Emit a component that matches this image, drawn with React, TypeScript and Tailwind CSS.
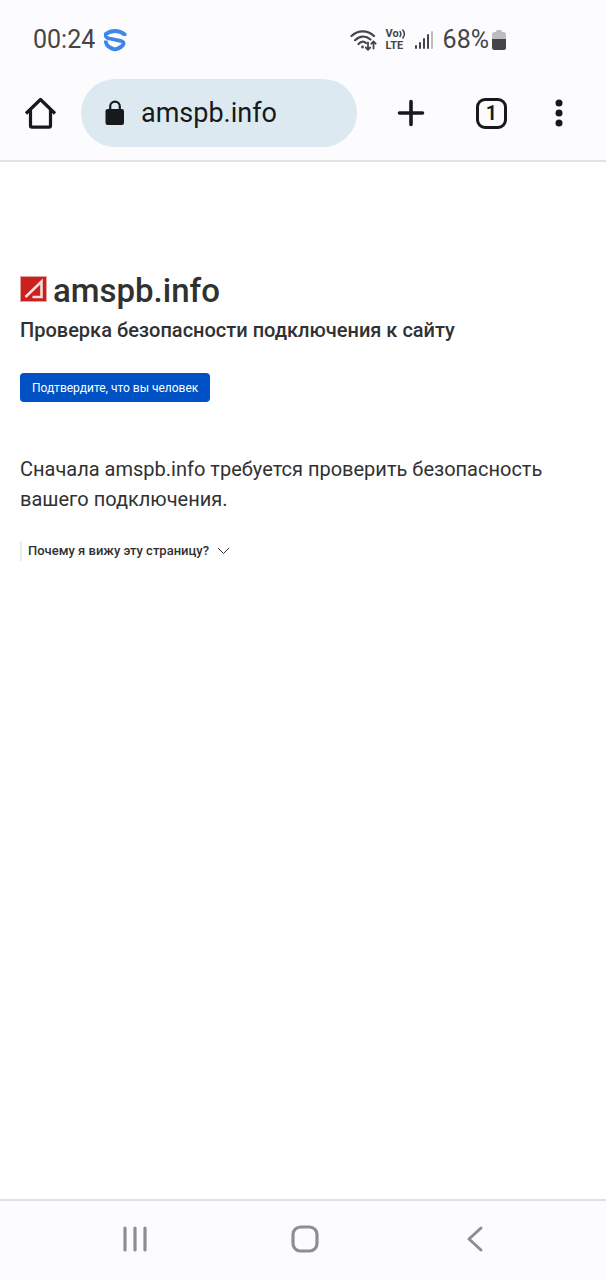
import React, { useState } from 'react';

// ── Status bar icons ────────────────────────────────────────────────────────
const ShieldIcon = () => (
  <svg width="24" height="24" viewBox="0 0 24 24" fill="none" stroke="#3f86ea" strokeWidth="3.800">
    <path d="M21.500 8V6.200C18.500 4 15.500 3 12 3C8.500 3 5.500 4 2.800 6V8C3 9.600 4.500 10 6.500 10.500L17.500 12.800C20.500 13.500 21.300 15 20 17C18.500 19 15.500 20.500 12 21.500C8.500 20.500 5.500 19 4 17C3 15.500 2.700 14.500 2.700 12.500" />
  </svg>
);

const WifiIcon = () => (
  <svg width="28" height="24" viewBox="0 0 28 24" fill="none" stroke="#454547" strokeWidth="2.200" strokeLinecap="round">
    <path d="M1.500 8C8 1.800 17.500 1.800 24 8" />
    <path d="M5 12.200C10 7.500 16 7.500 20.500 11.500" />
    <path d="M8.500 16C11 13.300 14 13.300 16 15" />
    <circle cx="12.500" cy="19" r="1.400" fill="#454547" stroke="none" />
    <path d="M18 14.500V21.500M15.800 19.500L18 21.700L20.200 19.500M23.500 20.500V13.500M21.300 15.700L23.500 13.500L25.700 15.700" strokeWidth="1.800" />
  </svg>
);

const SignalIcon = () => (
  <svg width="20" height="22" viewBox="0 0 20 22" fill="#454547">
    <rect x="0" y="16" width="2" height="4" rx="1" />
    <rect x="4" y="13" width="2" height="7" rx="1" />
    <rect x="8" y="9" width="2" height="11" rx="1" />
    <rect x="12" y="5" width="2" height="15" rx="1" />
    <rect x="16" y="2" width="2" height="18" rx="1" fill="#bdbdbf" />
  </svg>
);

const BatteryIcon = () => (
  <svg width="14" height="20" viewBox="0 0 14 20">
    <path d="M4 2V1.500Q4 0 5.500 0H8.500Q10 0 10 1.500V2H11.500Q14 2 14 4.500V10H0V4.500Q0 2 2.500 2Z" fill="#bdbdbf" />
    <path d="M0 9H14V17.500Q14 20 11.500 20H2.500Q0 20 0 17.500Z" fill="#454547" />
  </svg>
);

const VoLte = () => (
  <div className="w-[22px] text-[11px] leading-3 font-bold text-[#454547]">
    <div className="flex items-center">
      Vo
      <svg width="8" height="10" viewBox="0 0 8 10" fill="none" stroke="#454547" strokeWidth="1.500" strokeLinecap="round">
        <path d="M1 2.500Q2.800 5 1 7.500M3.800 1Q7 5 3.800 9" />
      </svg>
    </div>
    <div>LTE</div>
  </div>
);

const StatusBar = () => (
  <div className="flex h-[79px] items-center pl-[33px] pr-[100px] text-[25px] text-[#454547]">
    <span>00:24</span>
    <span className="ml-2"><ShieldIcon /></span>
    <div className="flex-1" />
    <WifiIcon />
    <span className="ml-2"><VoLte /></span>
    <span className="ml-[7px]"><SignalIcon /></span>
    <span className="ml-2">68%</span>
    <span className="ml-[3px]"><BatteryIcon /></span>
  </div>
);

// ── Browser toolbar ─────────────────────────────────────────────────────────
const Toolbar = () => (
  <div className="flex items-center pb-[13px] pl-6 pr-[42px] text-[#17191c]">
    <button type="button" aria-label="Домой">
      <svg width="33" height="33" viewBox="0 0 33 33" fill="none" stroke="currentColor" strokeWidth="3.200" strokeLinejoin="round">
        <path d="M2 16.500L16.500 2.500L31 16.500" />
        <path d="M6.500 13V28.500Q6.500 30.200 8 30.200H25Q26.500 30.200 26.500 28.500V13" />
      </svg>
    </button>
    <button type="button" className="ml-6 flex h-[68px] min-w-0 flex-1 items-center rounded-full bg-[#dce9f1] pl-6 text-[27px]">
      <svg width="20" height="26" viewBox="0 0 20 26">
        <path d="M5.200 10V6.500A4.800 4.800 0 0 1 14.800 6.500V10" fill="none" stroke="currentColor" strokeWidth="2.200" />
        <rect x="0.500" y="9" width="18.500" height="16" rx="2.200" fill="currentColor" />
      </svg>
      <span className="ml-4">amspb.info</span>
    </button>
    <button type="button" aria-label="Новая вкладка" className="ml-10">
      <svg width="28" height="28" viewBox="0 0 28 28" fill="none" stroke="currentColor" strokeWidth="3.600" strokeLinecap="round">
        <path d="M14 2.500V25.500M2.500 14H25.500" />
      </svg>
    </button>
    <button type="button" aria-label="Вкладки" className="ml-[51px] flex size-[31px] items-center justify-center rounded-[9px] border-3 border-current text-xl font-semibold">
      1
    </button>
    <button type="button" aria-label="Меню" className="ml-[47px]">
      <svg width="10" height="30" viewBox="0 0 10 30" fill="currentColor">
        <circle cx="5" cy="5" r="3.500" />
        <circle cx="5" cy="15" r="3.500" />
        <circle cx="5" cy="25" r="3.500" />
      </svg>
    </button>
  </div>
);

// ── Site logo ───────────────────────────────────────────────────────────────
const SiteLogo = () => (
  <svg width="27" height="30" viewBox="0 0 27 30" fill="none">
    <rect width="27" height="26" fill="#e3a19e" />
    <rect x="1" y="1" width="25" height="24" fill="#c9211f" />
    <path d="M5.500 21L21.500 5.500V21H12.500" stroke="#f7dddb" strokeWidth="2.600" />
  </svg>
);

// ── System navigation ───────────────────────────────────────────────────────
const NavBar = () => (
  <nav className="grid h-[81px] grid-cols-3 items-center justify-items-center border-t-2 border-[#e0e1e3] bg-[#fcfcfe] pb-1 pl-[50px] pr-[46px] text-[#8e8e90]">
    <button type="button" aria-label="Недавние">
      <svg width="28" height="28" viewBox="0 0 28 28" stroke="currentColor" strokeWidth="3.200" strokeLinecap="round">
        <path d="M4 3V25M14 3V25M24 3V25" />
      </svg>
    </button>
    <button type="button" aria-label="Главный экран">
      <svg width="28" height="28" viewBox="0 0 28 28" fill="none" stroke="currentColor" strokeWidth="3.200">
        <rect x="2" y="2" width="24" height="24" rx="7.500" />
      </svg>
    </button>
    <button type="button" aria-label="Назад">
      <svg width="28" height="28" viewBox="0 0 28 28" fill="none" stroke="currentColor" strokeWidth="3" strokeLinecap="round" strokeLinejoin="round">
        <path d="M20 3L8 14L20 25" />
      </svg>
    </button>
  </nav>
);

export default function App() {
  const [open, setOpen] = useState(false);

  return (
    <div className="flex min-h-screen flex-col bg-white font-[Roboto,sans-serif]">
      <header className="border-b-2 border-[#e0e3e9] bg-[#fcfcfe]">
        <StatusBar />
        <Toolbar />
      </header>

      <main className="flex-1 px-5 pt-[109px] text-[#313131]">
        <h1 className="flex items-center gap-1.5 text-[33px] leading-10 font-medium">
          <SiteLogo />
          amspb.info
        </h1>
        <h2 className="mt-1 text-xl leading-[30px] font-medium">Проверка безопасности подключения к сайту</h2>
        <button type="button" className="mt-7 block h-[29px] rounded bg-[#0051c3] px-3 text-xs text-white">
          Подтвердите, что вы человек
        </button>
        <p className="mt-[52px] text-xl leading-[30px]">
          Сначала amspb.info требуется проверить безопасность вашего подключения.
        </p>
        <div className="mt-[27px] border-l-2 border-[#ebebeb] pl-1.5">
          <button
            type="button"
            onClick={() => setOpen(!open)}
            aria-expanded={open}
            className="flex items-center gap-2 text-[13px] leading-5 font-medium"
          >
            Почему я вижу эту страницу?
            <svg width="13" height="8" viewBox="0 0 13 8" fill="none" stroke="currentColor">
              <path d="M1 1L6.500 6.500L12 1" />
            </svg>
          </button>
        </div>
      </main>

      <NavBar />
    </div>
  );
}
